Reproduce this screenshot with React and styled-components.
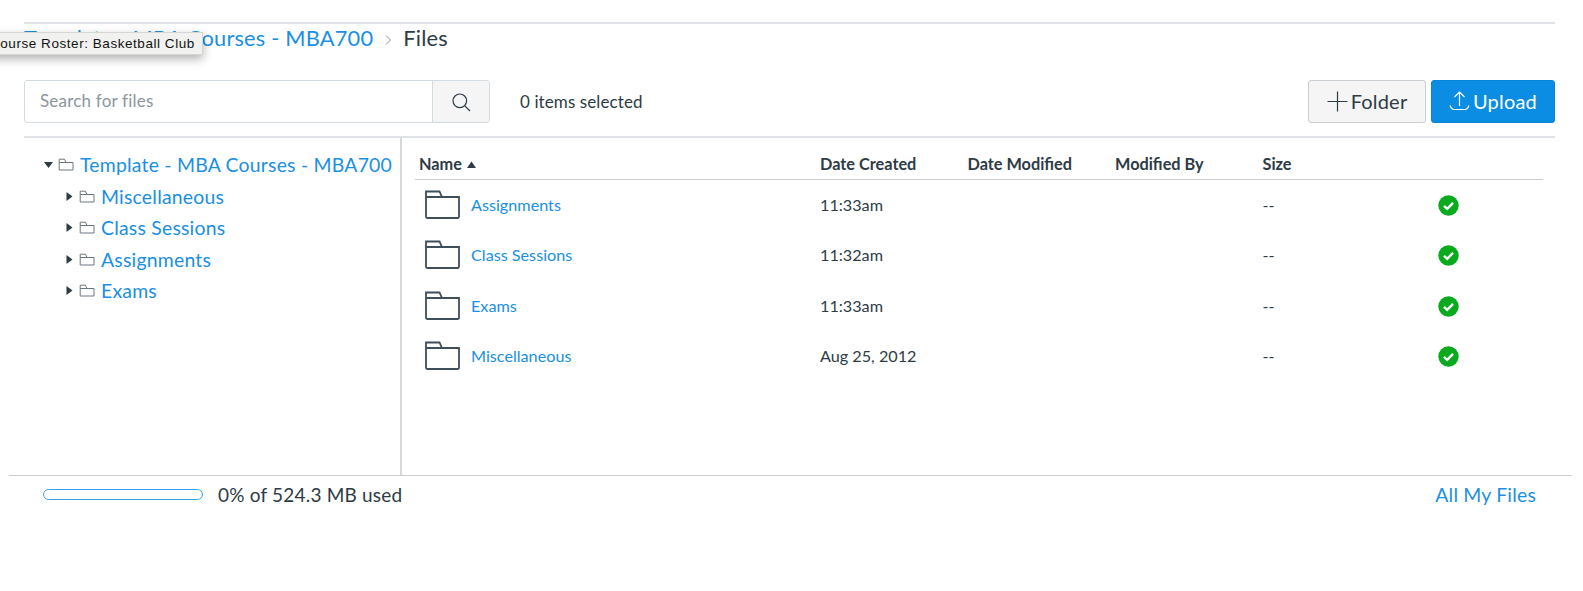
import React from "react";
import styled, { createGlobalStyle } from "styled-components";

const Global = createGlobalStyle`
  html, body { margin: 0; padding: 0; background: #fff; }
  body { font-family: Lato, "Noto Sans", sans-serif; color: #2d3b45; overflow: hidden; }
`;

const Page = styled.div`
  position: relative;
  width: 1583px;
  height: 591px;
  padding-top: 22px;
  box-sizing: border-box;
  overflow: hidden;
`;

const Header = styled.header`
  margin: 0 28px 0 24px;
  border-top: 2px solid #dfe3e7;
  height: 58px;
  box-sizing: border-box;
  display: flex;
  align-items: flex-start;
  font-size: 21.8px;
  line-height: 28px;
  letter-spacing: 0.2px;
`;

const CrumbLink = styled.span`color: #1a8fe3;`;
const CrumbSep = styled.svg`width: 10px; height: 12px; margin: 10px 10px 0 10px; flex: none;`;
const CrumbCurrent = styled.span`color: #2d3b45;`;

const Tooltip = styled.div`
  position: absolute;
  left: -12px;
  top: 32px;
  width: 215px;
  height: 23px;
  box-sizing: border-box;
  padding-left: 1px;
  background: #f1f1ef;
  border: 1px solid #d6d6d4;
  box-shadow: 0 4px 10px rgba(0, 0, 0, 0.3);
  font-family: "Liberation Sans", Arial, sans-serif;
  font-size: 13.5px;
  line-height: 21px;
  color: #111;
  white-space: nowrap;
  letter-spacing: 0.55px;
`;

const Toolbar = styled.div`
  margin: 0 28px 0 24px;
  height: 56px;
  display: flex;
  align-items: flex-start;
  border-bottom: 2px solid #dfe3e7;
`;

const SearchGroup = styled.div`
  width: 466px;
  height: 43px;
  display: flex;
  box-sizing: border-box;
  border: 1px solid #d3dbe2;
  border-radius: 3px;
  overflow: hidden;
`;

const SearchField = styled.div`
  flex: 1;
  padding-left: 15px;
  font-size: 17px;
  line-height: 40px;
  color: #8b969e;
  letter-spacing: 0.2px;
`;

const SearchButton = styled.div`
  width: 56px;
  background: #f5f5f5;
  border-left: 1px solid #d3dbe2;
  display: flex;
  align-items: center;
  justify-content: center;
`;

const Selected = styled.div`
  margin-left: 30px;
  font-size: 17px;
  line-height: 43px;
  color: #2d3b45;
  letter-spacing: 0.1px;
`;

const Actions = styled.div`
  margin-left: auto;
  display: flex;
  gap: 5px;
`;

const Button = styled.div`
  height: 43px;
  width: ${(p) => p.$w}px;
  box-sizing: border-box;
  border-radius: 3px;
  padding-bottom: 1px;
  display: flex;
  align-items: center;
  justify-content: center;
  gap: 3px;
  font-size: 20px;
  letter-spacing: 0.2px;
  background: ${(p) => (p.$primary ? "#0a8de2" : "#f5f5f5")};
  color: ${(p) => (p.$primary ? "#fff" : "#2d3b45")};
  border: 1px solid ${(p) => (p.$primary ? "#0a84d4" : "#c7cdd1")};
`;

const Body = styled.div`
  display: flex;
  margin-left: 9px;
  width: 1563px;
  height: 338px;
  box-sizing: border-box;
  border-bottom: 1px solid #c7cdd1;
`;

const Tree = styled.nav`
  width: 393px;
  flex: none;
  box-sizing: border-box;
  border-right: 2px solid #d5d9dc;
  padding-top: 11px;
`;

const TreeRow = styled.div`
  height: 31.5px;
  display: flex;
  align-items: center;
  padding-left: ${(p) => (p.$root ? 35 : 56)}px;
  font-size: 19.4px;
  color: #1a8fe3;
  letter-spacing: 0.22px;
  white-space: nowrap;
`;

const Caret = styled.svg`width: 9px; height: 9px; flex: none; margin-right: 5px;`;
const TreeFolder = styled.svg`width: 16px; height: 13px; flex: none; margin-right: 6px;`;

const Main = styled.section`
  flex: 1;
  padding-left: 13px;
  padding-right: 29px;
`;

const Grid = styled.div`
  display: grid;
  grid-template-columns: 405px 147.5px 147.5px 147.5px 147.5px 1fr;
`;

const HeadRow = styled(Grid)`
  align-items: end;
  padding-bottom: 5px;
  box-sizing: border-box;
  height: 42px;
  border-bottom: 1px solid #c7cdd1;
  font-size: 16.3px;
  font-weight: 700;
  line-height: 20px;
  color: #2d3b45;
`;

const HeadCell = styled.div`
  padding-left: ${(p) => (p.$first ? 4 : 0)}px;
  display: flex;
  align-items: center;
  gap: 5px;
`;

const SortUp = styled.svg`width: 9px; height: 7px;`;

const FileRow = styled(Grid)`
  height: 50.5px;
  box-sizing: border-box;
  padding-bottom: 2px;
  align-items: center;
  font-size: 16.2px;
  color: #2d3b45;
`;

const NameCell = styled.div`
  display: flex;
  align-items: center;
  padding-left: 10px;
  gap: 11px;
  color: #1a8fe3;
`;

const RowFolder = styled.svg`width: 35px; height: 29px; flex: none;`;
const StatusCell = styled.div`padding: 2px 0 0 28px; display: flex;`;
const Status = styled.svg`width: 21px; height: 21px;`;

const Footer = styled.footer`
  margin: 0 0 0 43px;
  width: 1493px;
  height: 37px;
  display: flex;
  align-items: center;
  font-size: 19px;
  letter-spacing: 0.2px;
`;

const Meter = styled.div`
  width: 160px;
  height: 11px;
  box-sizing: border-box;
  border: 1px solid #3d9fe8;
  border-radius: 6px;
  margin-right: 15px;
`;

const AllFiles = styled.span`
  margin-left: auto;
  font-size: 19.4px;
  color: #1a8fe3;
`;

const FolderGlyph = () => (
  <path d="M1.2 4.5V1.2h5.2l1.6 3.3h7V12H1.2V4.5zM1.2 4.5h6.8" fill="none" stroke="#6b7780" strokeWidth="1" />
);

const TreeItem = ({ name, root }) => (
  <TreeRow $root={root}>
    <Caret viewBox="0 0 9 9">
      <path d={root ? "M0 2h9L4.5 8z" : "M1.5 0l6 4.5-6 4.5z"} fill="#2d3b45" />
    </Caret>
    <TreeFolder viewBox="0 0 16 13"><FolderGlyph /></TreeFolder>
    {name}
  </TreeRow>
);

const files = [
  ["Assignments", "11:33am"],
  ["Class Sessions", "11:32am"],
  ["Exams", "11:33am"],
  ["Miscellaneous", "Aug 25, 2012"],
];

export default function App() {
  return (
    <Page>
      <Global />
      <Header>
        <CrumbLink>Template - MBA Courses - MBA700</CrumbLink>
        <CrumbSep viewBox="0 0 10 12">
          <path d="M3 1.5L7.5 6 3 10.5" fill="none" stroke="#8b969e" strokeWidth="1" />
        </CrumbSep>
        <CrumbCurrent>Files</CrumbCurrent>
      </Header>
      <Tooltip>Course Roster: Basketball Club</Tooltip>
      <Toolbar>
        <SearchGroup>
          <SearchField>Search for files</SearchField>
          <SearchButton>
            <svg width="20" height="20" viewBox="0 0 20 20" fill="none" stroke="#2d3b45" strokeWidth="1.2">
              <circle cx="8.8" cy="8.8" r="6.8" />
              <path d="M13.6 13.6L19 19" />
            </svg>
          </SearchButton>
        </SearchGroup>
        <Selected>0 items selected</Selected>
        <Actions>
          <Button $w={118}>
            <svg width="21" height="21" viewBox="0 0 21 21" stroke="#2d3b45" strokeWidth="1.2">
              <path d="M10.5 0.5v20M0.5 10.5h20" />
            </svg>
            Folder
          </Button>
          <Button $w={124} $primary>
            <svg width="21" height="20" viewBox="0 0 21 20" fill="none" stroke="#fff" strokeWidth="1.2">
              <path d="M10.5 15V1M5.5 6l5-5 5 5M1 14.5c1 2.5 2 4 4 4h11c2 0 3-1.500 4-4" />
            </svg>
            Upload
          </Button>
        </Actions>
      </Toolbar>
      <Body>
        <Tree>
          <TreeItem root name="Template - MBA Courses - MBA700" />
          <TreeItem name="Miscellaneous" />
          <TreeItem name="Class Sessions" />
          <TreeItem name="Assignments" />
          <TreeItem name="Exams" />
        </Tree>
        <Main>
          <HeadRow>
            <HeadCell $first>
              Name
              <SortUp viewBox="0 0 9 7"><path d="M4.500 0.500L9 7H0z" fill="#2d3b45" /></SortUp>
            </HeadCell>
            <HeadCell>Date Created</HeadCell>
            <HeadCell>Date Modified</HeadCell>
            <HeadCell>Modified By</HeadCell>
            <HeadCell>Size</HeadCell>
            <HeadCell />
          </HeadRow>
          {files.map(([name, date]) => (
            <FileRow key={name}>
              <NameCell>
                <RowFolder viewBox="0 0 35 29" fill="none" stroke="#3f4e5b" strokeWidth="1.8">
                  <path d="M1 7V1.500h13.500L17 7h17v19.500a1.500 1.500 0 0 1-1.500 1.500h-30A1.500 1.500 0 0 1 1 26.500V7zM1 7h16" />
                </RowFolder>
                {name}
              </NameCell>
              <div>{date}</div>
              <div />
              <div />
              <div>--</div>
              <StatusCell>
                <Status viewBox="0 0 21 21">
                  <circle cx="10.500" cy="10.500" r="10.200" fill="#0aaa1e" />
                  <path d="M6 10.800l3.200 3L15 7.800" fill="none" stroke="#fff" strokeWidth="2.400" />
                </Status>
              </StatusCell>
            </FileRow>
          ))}
        </Main>
      </Body>
      <Footer>
        <Meter />
        0% of 524.3 MB used
        <AllFiles>All My Files</AllFiles>
      </Footer>
    </Page>
  );
}
